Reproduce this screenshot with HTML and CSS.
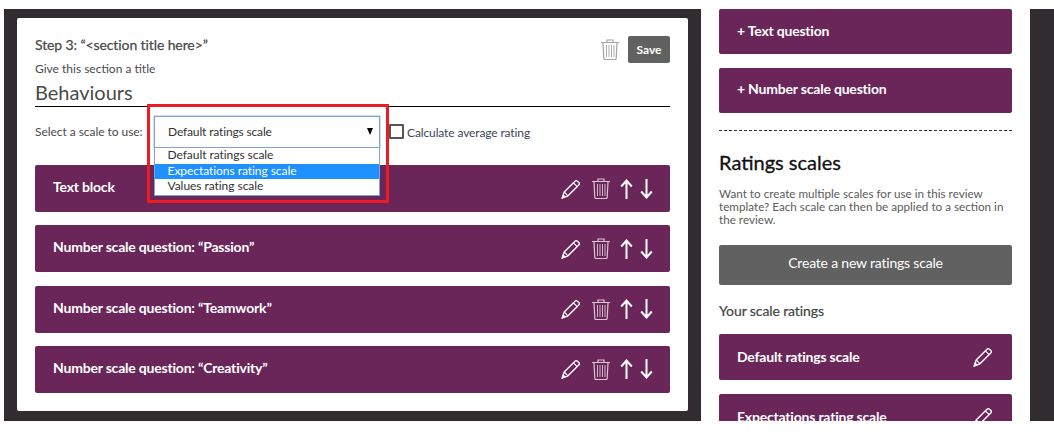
FILE: index.html
```html
<!DOCTYPE html>
<html lang="en">
<head>
<meta charset="utf-8">
<title>Review template</title>
<link rel="stylesheet" href="styles.css">
</head>
<body>
<svg class="defs" width="0" height="0" aria-hidden="true">
  <symbol id="pencil" viewBox="0 0 20 20">
    <path d="M1 19.2 3.2 13 14 2.2q1.2-1.2 2.4 0l1.4 1.4q1.2 1.2 0 2.4L7 16.8Z" fill="none" stroke="currentColor" stroke-width="1.4" stroke-linejoin="round"/>
    <path d="M3.2 13 7 16.8M12.4 3.8l3.8 3.8" fill="none" stroke="currentColor" stroke-width="1.1"/>
    <path d="M.8 19.4 2.2 15.2 5 18Z" fill="currentColor"/>
  </symbol>
  <symbol id="trash" viewBox="0 0 18 21">
    <path d="M0 3.5h18M6 3V1h6v2" fill="none" stroke="currentColor" stroke-width="1.2"/>
    <path d="M2 4l.8 15.2q.1 1.3 1.4 1.3h9.6q1.3 0 1.4-1.3L16 4" fill="none" stroke="currentColor" stroke-width="1.2"/>
    <path d="M5.5 6v12M8 6v12M10.5 6v12M13 6v12" fill="none" stroke="currentColor" stroke-width=".9"/>
  </symbol>
  <symbol id="up" viewBox="0 0 13 20">
    <path d="M6.5 20V1.5M1.2 7.5l5.3-6 5.3 6" fill="none" stroke="currentColor" stroke-width="2"/>
  </symbol>
  <symbol id="down" viewBox="0 0 13 20">
    <path d="M6.5 0v18.5M1.2 12.5l5.3 6 5.3-6" fill="none" stroke="currentColor" stroke-width="2"/>
  </symbol>
</svg>
<div class="frame">
  <main class="main">
    <section class="card">
      <header class="card-head">
        <div>
          <h2 class="step">Step 3: “&lt;section title here&gt;”</h2>
          <div class="give">Give this section a title</div>
        </div>
        <div class="head-actions">
          <svg class="head-trash"><use href="#trash"/></svg>
          <button class="save">Save</button>
        </div>
      </header>
      <div class="title-input">Behaviours</div>
      <div class="scale-line">
        <span class="scale-label">Select a scale to use:</span>
        <div class="select-wrap">
          <div class="select"><span>Default ratings scale</span><span class="caret"></span></div>
          <ul class="options">
            <li>Default ratings scale</li>
            <li class="selected">Expectations rating scale</li>
            <li>Values rating scale</li>
          </ul>
          <div class="highlight"></div>
        </div>
        <span class="checkbox"></span>
        <span class="check-label">Calculate average rating</span>
      </div>
      <div class="rows">
        <div class="row"><span>Text block</span>
          <div class="icons"><svg class="i-pencil"><use href="#pencil"/></svg><svg class="i-trash"><use href="#trash"/></svg><svg class="i-arrow"><use href="#up"/></svg><svg class="i-arrow"><use href="#down"/></svg></div>
        </div>
        <div class="row"><span>Number scale question: “Passion”</span>
          <div class="icons"><svg class="i-pencil"><use href="#pencil"/></svg><svg class="i-trash"><use href="#trash"/></svg><svg class="i-arrow"><use href="#up"/></svg><svg class="i-arrow"><use href="#down"/></svg></div>
        </div>
        <div class="row"><span>Number scale question: “Teamwork”</span>
          <div class="icons"><svg class="i-pencil"><use href="#pencil"/></svg><svg class="i-trash"><use href="#trash"/></svg><svg class="i-arrow"><use href="#up"/></svg><svg class="i-arrow"><use href="#down"/></svg></div>
        </div>
        <div class="row"><span>Number scale question: “Creativity”</span>
          <div class="icons"><svg class="i-pencil"><use href="#pencil"/></svg><svg class="i-trash"><use href="#trash"/></svg><svg class="i-arrow"><use href="#up"/></svg><svg class="i-arrow"><use href="#down"/></svg></div>
        </div>
      </div>
    </section>
  </main>
  <aside class="side">
    <div class="add">+ Text question</div>
    <div class="add">+ Number scale question</div>
    <hr class="dash">
    <h3 class="side-title">Ratings scales</h3>
    <p class="side-text">Want to create multiple scales for use in this review template? Each scale can then be applied to a section in the review.</p>
    <div class="create">Create a new ratings scale</div>
    <h4 class="your">Your scale ratings</h4>
    <div class="scale-row"><span>Default ratings scale</span><svg class="i-pencil"><use href="#pencil"/></svg></div>
    <div class="scale-row"><span>Expectations rating scale</span><svg class="i-pencil"><use href="#pencil"/></svg></div>
  </aside>
  <div class="edge"></div>
</div>
</body>
</html>
```

FILE: styles.css
```css
* { box-sizing: border-box; }
html, body { margin: 0; padding: 0; background: #fff; }
body { font-family: Lato, "Open Sans", sans-serif; color: #4a4a4a; overflow: hidden; height: 436px; padding-top: 9px; }
.defs { position: absolute; }
.frame { display: flex; height: 412px; overflow: hidden; margin-left: 4px; }
.main { width: 697px; background: #302c2f; padding: 9px 13px 10px; flex: none; }
.card { background: #fff; height: 393px; padding: 18px 18px 0; border-radius: 2px; }
.card-head { display: flex; justify-content: space-between; align-items: flex-start; height: 42px; }
.step { margin: 0; font-size: 14px; line-height: 17px; font-weight: 400; -webkit-text-stroke: .25px #4a4a4a; color: #4a4a4a; letter-spacing: -.1px; }
.give { font-size: 12px; line-height: 14px; margin-top: 9px; }
.head-actions { display: flex; align-items: flex-start; gap: 9px; }
.head-trash { width: 18px; height: 21px; margin-top: 3px; color: #a3a3a3; }
.save { width: 42px; height: 27px; padding: 0; border: 0; border-radius: 2px; background: #616161; color: #fff; font: 700 12px Lato, sans-serif; }
.title-input { height: 33px; margin-top: -4px; padding-top: 5px; font-size: 20px; line-height: 26px; border-bottom: 1px solid #000; color: #4a4a4a; }
.scale-line { display: flex; align-items: flex-start; height: 58px; font-size: 12px; }
.scale-label { width: 119px; padding-top: 17px; line-height: 15px; letter-spacing: -.05px; }
.select-wrap { position: relative; width: 226px; margin-top: 9px; }
.select { height: 32px; border: 1px solid #7da4dc; display: flex; justify-content: space-between; align-items: center; padding: 0 5px 2px 13px; color: #333; background: #fff; box-shadow: 0 0 0 .5px #9fbdea; letter-spacing: -.15px; }
.caret { width: 0; height: 0; border-left: 3.5px solid transparent; border-right: 3.5px solid transparent; border-top: 7px solid #000; margin-right: 1px; }
.options { position: absolute; left: 0; right: 0; top: 31px; margin: 0; padding: 0; list-style: none; background: #fff; border: 1px solid #7da4dc; color: #333; z-index: 2; }
.options li { height: 15.5px; line-height: 14px; padding-left: 12.5px; letter-spacing: -.05px; }
.options .selected { background: #1e90ff; color: #fff; }
.highlight { position: absolute; left: -7px; top: -12px; width: 242px; height: 99px; border: 3px solid #ed1c24; z-index: 3; pointer-events: none; }
.checkbox { width: 15px; height: 15px; border: 2px solid #555; border-radius: 1px; margin: 17px 3px 0 9px; flex: none; }
.check-label { padding-top: 18px; line-height: 16px; color: #3c4658; letter-spacing: -.12px; }
.rows { display: flex; flex-direction: column; gap: 13.25px; }
.row { height: 47px; background: #6a2559; color: #fff; border-radius: 2px; display: flex; justify-content: space-between; align-items: center; padding: 0 17px 0 18px; font-size: 14px; font-weight: 700; letter-spacing: -.2px; }
.row > span { margin-bottom: 4px; }
.icons { display: flex; align-items: center; }
.i-pencil { width: 20px; height: 20px; color: #fff; flex: none; }
.i-trash { width: 18px; height: 21px; margin-left: 11px; color: #d9c6d4; }
.i-arrow { width: 13px; height: 20px; margin-left: 7px; color: #fff; }
.i-arrow:nth-child(3) { margin-left: 10px; }
.side { width: 329px; flex: none; padding: 0 18px; }
.add { height: 45px; margin-bottom: 14px; background: #6a2559; color: #fff; border-radius: 2px; font-size: 14px; font-weight: 700; line-height: 43px; padding-left: 18px; letter-spacing: -.2px; }
.add + .add { line-height: 42px; }
.dash { height: 0; margin: 17px 0 0; border: 0; border-top: 1px dashed #333; }
.side-title { margin: 19px 0 0; font-size: 20px; line-height: 24px; font-weight: 400; -webkit-text-stroke: .3px #111; color: #111; }
.side-text { margin: 13px 0 0; font-size: 11.7px; line-height: 13px; color: #5b5b5b; }
.create { height: 40px; margin-top: 19px; background: #616161; color: #fff; border-radius: 2px; text-align: center; font-size: 14px; line-height: 36px; letter-spacing: -.2px; }
.your { margin: 17px 0 0; font-size: 14px; line-height: 18px; font-weight: 400; -webkit-text-stroke: .2px #444; color: #444; letter-spacing: -.1px; }
.scale-row { height: 46px; margin-top: 14px; background: #6a2559; color: #fff; border-radius: 2px; display: flex; justify-content: space-between; align-items: center; padding: 0 19px 0 18px; font-size: 14px; font-weight: 700; letter-spacing: -.2px; }
.scale-row > span { margin-bottom: 2px; }
.edge { flex: 1; background: #302c2f; }
```
